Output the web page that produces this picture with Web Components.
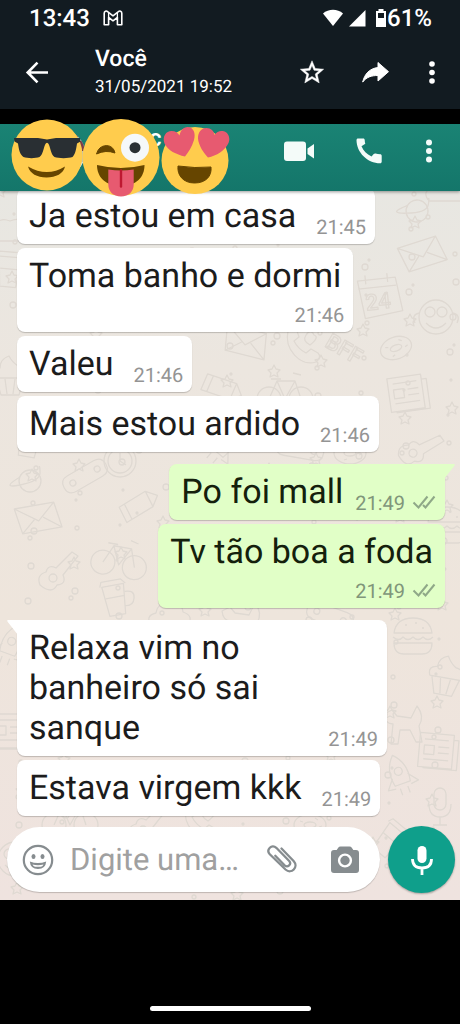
<!DOCTYPE html>
<html lang="pt-BR">
<head>
<meta charset="utf-8">
<meta name="viewport" content="width=device-width, initial-scale=1">
<title>Você</title>
<style>
    body {
        margin: 0;
        background: #000;
        font-family: Roboto, "Liberation Sans", sans-serif;
        text-rendering: geometricPrecision;
    }
</style>
</head>
<body>
<phone-screen>
    <status-bar slot="top" time="13:43" battery="61%"></status-bar>
    <viewer-bar slot="top" name="Você" date="31/05/2021 19:52"></viewer-bar>
    <chat-header></chat-header>
    <chat-thread>
        <chat-message time="21:45">Ja estou em casa</chat-message>
        <chat-message time="21:46" stacked>Toma banho e dormi</chat-message>
        <chat-message time="21:46">Valeu</chat-message>
        <chat-message time="21:46">Mais estou ardido</chat-message>
        <chat-message time="21:49" sent first>Po foi mall</chat-message>
        <chat-message time="21:49" sent stacked>Tv tão boa a foda</chat-message>
        <chat-message time="21:49" first>Relaxa vim no banheiro só sai sanque</chat-message>
        <chat-message time="21:49">Estava virgem kkk</chat-message>
        <chat-composer slot="composer"></chat-composer>
    </chat-thread>
</phone-screen>

<script>
class PhoneScreen extends HTMLElement {
    constructor() {
        super();
        this.attachShadow({ mode: 'open' });
        this.shadowRoot.innerHTML = `
            <style>
                :host {
                    display: flex;
                    flex-direction: column;
                    min-height: 100vh;
                    background: #000;
                }
                .top {
                    background: #121b21;
                }
                main {
                    margin-top: 15px;
                }
                footer {
                    flex: 1;
                    display: flex;
                    justify-content: center;
                    align-items: flex-end;
                    padding-bottom: 13px;
                }
                .home {
                    width: 35%;
                    height: 5px;
                    border-radius: 3px;
                    background: #fff;
                }
            </style>
            <div class="top"><slot name="top"></slot></div>
            <main><slot></slot></main>
            <footer><div class="home"></div></footer>
        `;
    }
}

class StatusBar extends HTMLElement {
    constructor() {
        super();
        this.attachShadow({ mode: 'open' });
    }

    connectedCallback() {
        this.shadowRoot.innerHTML = `
            <style>
                :host {
                    display: flex;
                    align-items: center;
                    height: 36px;
                    padding: 0 28px 0 29px;
                    color: #fff;
                    font-size: 24px;
                    font-weight: 500;
                }
                svg {
                    display: block;
                    fill: #fff;
                }
                .mail {
                    margin-left: 13px;
                }
                .right {
                    display: flex;
                    align-items: center;
                    margin-left: auto;
                }
                .signal {
                    margin: 0 9px 0 5px;
                }
            </style>
            <span>${this.getAttribute('time')}</span>
            <svg class="mail" width="20" height="16" viewBox="0 0 20 16">
                <path d="M1.200 14.800V3.200C1.200 1 3.400.6 4.600 1.600L10 5.800l5.400-4.200c1.200-1 3.400-.6 3.400 1.600v11.600h-4.400V7.400L10 10.800 5.600 7.400v7.400z" fill="none" stroke="#fff" stroke-width="1.600" stroke-linejoin="round"/>
                <path d="M5.600 7.400V2.800M14.400 7.400V2.800" stroke="#fff" stroke-width="1.300"/>
            </svg>
            <div class="right">
                <svg width="20" height="18" viewBox="0 0 20 18"><path d="M0 4.500C5.500-.4 14.500-.4 20 4.500L10 17z"/></svg>
                <svg class="signal" width="18" height="18" viewBox="0 0 18 18"><path d="M17.500 1v16.500H1z"/></svg>
                <svg width="12" height="18" viewBox="0 0 12 18"><path d="M3.500 0h5v2h2.500v16H1V2h2.500zM3 4v5h6V4z" fill-rule="evenodd"/></svg>
                <span>${this.getAttribute('battery')}</span>
            </div>
        `;
    }
}

class ViewerBar extends HTMLElement {
    constructor() {
        super();
        this.attachShadow({ mode: 'open' });
    }

    connectedCallback() {
        this.shadowRoot.innerHTML = `
            <style>
                :host {
                    display: flex;
                    align-items: center;
                    height: 73px;
                    padding: 0 22px 0 25px;
                    color: #fff;
                }
                button {
                    padding: 0;
                    border: 0;
                    background: none;
                    cursor: pointer;
                }
                svg {
                    display: block;
                }
                .titles {
                    flex: 1;
                    margin-left: 46px;
                }
                h1 {
                    margin: 0;
                    font-size: 23px;
                    font-weight: 500;
                    line-height: 28px;
                }
                time {
                    display: block;
                    font-size: 17px;
                    line-height: 28px;
                }
                .actions {
                    display: flex;
                    align-items: center;
                    gap: 36px;
                }
            </style>
            <button aria-label="Voltar">
                <svg width="24" height="24" viewBox="0 0 24 24"><path d="M23 11.500H3M12.500 1.700L2.700 11.500l9.800 9.800" fill="none" stroke="#fff" stroke-width="2.600"/></svg>
            </button>
            <div class="titles">
                <h1>${this.getAttribute('name')}</h1>
                <time>${this.getAttribute('date')}</time>
            </div>
            <div class="actions">
                <button aria-label="Favoritar">
                    <svg width="28" height="28" viewBox="0 0 24 24"><path fill="#fff" stroke="#fff" stroke-width=".4" d="M22 8.740l-7.190-.62L12 1.500 9.190 8.130 2 8.740l5.460 4.730L5.820 20.500 12 16.770 18.180 20.500l-1.630-7.030zM12 14.900l-3.760 2.270 1-4.280-3.320-2.880 4.380-.38L12 5.600l1.710 4.040 4.380.38-3.320 2.880 1 4.280z"/></svg>
                </button>
                <button aria-label="Encaminhar">
                    <svg width="28" height="28" viewBox="0 0 28 28"><path fill="#fff" d="M16 3.500v5C7.500 9.500 2.500 15 .7 23.100 4.500 18 9.500 16.500 16 16.500V22l10.500-9.300z" stroke="#fff" stroke-width="1" stroke-linejoin="round"/></svg>
                </button>
                <button aria-label="Mais opções">
                    <svg width="12" height="24" viewBox="0 0 12 24" fill="#fff"><circle cx="6" cy="3" r="2.800"/><circle cx="6" cy="11.500" r="2.800"/><circle cx="6" cy="20" r="2.800"/></svg>
                </button>
            </div>
        `;
    }
}

class ChatHeader extends HTMLElement {
    constructor() {
        super();
        this.attachShadow({ mode: 'open' });
        this.shadowRoot.innerHTML = `
            <style>
                :host {
                    position: relative;
                    z-index: 2;
                    display: flex;
                    align-items: center;
                    box-sizing: border-box;
                    height: 67px;
                    padding: 0 25px 13px 36px;
                    background: linear-gradient(#1a8374, #14766a);
                    box-shadow: 0 1px 3px rgba(0, 0, 0, 0.4);
                    color: #fff;
                }
                button {
                    padding: 0;
                    border: 0;
                    background: none;
                    cursor: pointer;
                }
                svg {
                    display: block;
                }
                .name {
                    flex: 1;
                    margin-left: 63px;
                    padding-bottom: 27px;
                    font-size: 24px;
                    font-weight: 500;
                    line-height: 26px;
                }
                .actions {
                    display: flex;
                    align-items: center;
                    gap: 40px;
                }
                .stickers {
                    position: absolute;
                    left: 10px;
                    top: -6px;
                }
            </style>
            <svg width="50" height="50" viewBox="0 0 50 50">
                <clipPath id="round"><circle cx="26" cy="27" r="23"/></clipPath>
                <g clip-path="url(#round)">
                    <path fill="#b9c4bd" d="M0 0h50v50H0z"/>
                    <path fill="#8c6a58" d="M0 6h50v5H0z"/>
                    <path fill="#7b3e48" d="M0 15h50v10H0z"/>
                    <path fill="#dfe6e1" d="M0 36h50v14H0z"/>
                </g>
            </svg>
            <span class="name">c</span>
            <div class="actions">
                <button aria-label="Chamada de vídeo">
                    <svg width="32" height="28" viewBox="0 0 32 28" fill="#f4fbf9"><rect x="1" y="4.500" width="22" height="19.500" rx="3"/><path d="M31 7v14.500l-6.500-4.500v-5.500z"/></svg>
                </button>
                <button aria-label="Ligar">
                    <svg width="28" height="28" viewBox="0 0 28 28"><path fill="#f4fbf9" d="M6.500 9.200c1.900 4.500 5.200 8.100 10 10.200l2.200-2.400c.5-.5 1.200-.7 1.800-.5 1.500.5 3.100.7 4.700.8.900 0 1.500.7 1.500 1.500v6c0 .9-.7 1.500-1.500 1.500C12.500 26.300 1.500 15.500 1.500 3c0-.9.7-1.500 1.500-1.500h5.200c.9 0 1.500.7 1.500 1.500.1 1.300.2 2.600.6 3.700z"/></svg>
                </button>
                <button aria-label="Mais opções">
                    <svg width="12" height="24" viewBox="0 0 12 24" fill="#f4fbf9"><circle cx="6" cy="3.500" r="3"/><circle cx="6" cy="12" r="3"/><circle cx="6" cy="20.500" r="3"/></svg>
                </button>
            </div>
            <svg class="stickers" width="220" height="80" viewBox="10 118 220 80">
                <circle cx="47" cy="155" r="35.500" fill="#ffcc4d"/>
                <path fill="#292f33" d="M14 138h24l9 1.500 9-1.500h24l.5 3.500-3.500 2c-1 7-2 11-4.500 13.500-4 1.500-14 1.500-18 0-4-2.500-4-11-6.500-13.800q-1-.7-2 0c-2.500 2.800-2.500 11.300-6.500 13.800-4 1.500-12 1.500-16 0-3.500-2.500-4.500-6.500-5.500-13.500l-3.500-2z"/>
                <path fill="#664500" d="M28 166.500q19 11 37 0c-1.500 7-9 11-18.500 11s-16.500-4-18.500-11z"/>

                <circle cx="121" cy="157.500" r="38.500" fill="#ffcc4d"/>
                <circle cx="135" cy="147.700" r="14" fill="#f5f8fa"/>
                <circle cx="135" cy="147.700" r="5.500" fill="#292f33"/>
                <path fill="#664500" d="M96.500 154q2-8 10-8.500 7 .5 8.500 7.500-9-3.500-18.500 1z" stroke="#664500" stroke-linejoin="round"/>
                <path fill="#664500" d="M97 165q24 6 47.500 0c0 12-8 21-23.500 21s-24-9-24-21z"/>
                <path fill="#e75a70" d="M108.300 169.500q12.700 2 25.400 0v15c0 7-5 12-12.700 12s-12.700-5-12.700-12z"/>
                <path d="M121 170.500v16" stroke="#be1931" stroke-width="2.400" stroke-linecap="round"/>

                <circle cx="195" cy="160.500" r="33.500" fill="#ffcc4d"/>
                <path fill="#e75a70" d="M185 156.500c-9-2-17-6-20.500-13-2.500-7 1.500-12.500 7-12.500 4 0 6.500 2 8 4.500 1-5 4-8.500 8-8.500 6 0 8.500 6.500 6.500 13-2 7-6 12.500-9 16.500z"/>
                <path fill="#e75a70" d="M208 157.500c-4-4-9.500-12-10-19 0-6 3-10.500 8.500-10.500 4.500 0 7.500 3 8 7 2-3 5-4.500 8-4 5 .5 8.500 6 6 12-3.500 8-12 12.500-20.500 14.500z"/>
                <path fill="#664500" d="M178 166q17 2.500 33 1c1 9-5 16-16.500 16s-17.500-8-16.500-17z" stroke="#664500" stroke-linejoin="round"/>
            </svg>
        `;
    }
}

// line drawings of the wallpaper, each about 40px wide and centred on 0,0
const DOODLES = {
    calendar: '<path d="M-20-16h38l4 34-38 4zM-20-8h38M-12-21v9M10-21v9"/><text x="-14" y="14">24</text>',
    monkey: '<circle r="17"/><circle cx="-6" cy="-5" r="5"/><circle cx="6" cy="-5" r="5"/><path d="M-10 6q10 10 20 0M-17-4q-8 2-4 10M17-4q8 2 4 10"/>',
    letter: '<path d="M-22-12h40l4 26h-40zM-22-12l22 16 18-16M-18 14L-4 2M22 14L5 1"/>',
    bff: '<text x="-20" y="8" transform="rotate(30)">BFF</text>',
    phone: '<path d="M-14-14q6-6 9 0l2 6-5 4q4 8 12 12l5-4 7 4q4 4-2 9C-2 22-18 4-14-14zM4-10q5-7 8 0 6 2-4 10-8-4-4-10"/>',
    planet: '<circle r="11"/><path d="M-10-4q-20 12 0 8t20-12-1-6"/>',
    cloud: '<path d="M-18 10q-8-10 4-13 2-12 14-7 12-5 13 6 12 4 4 14z"/>',
    paper: '<path d="M-19-17h34v34h-34zM15-12h5v30h-34M-14-11h24M-14-5h10v9h-10zM0-4h11M0 2h11M-14 9h25"/>',
    bike: '<circle cx="-16" cy="8" r="12"/><circle cx="16" cy="8" r="12"/><path d="M-16 8l8-18h18l6 18M-8-10L0 8l10-18M-14-12h10M8-18l8 2"/>',
    burger: '<path d="M-19-4q2-15 19-15T19-4zM-20 0q6 5 10 0 5 5 10 0 5 5 10 0 5 5 10 0M-19 6h38q0 11-10 11H-9q-10 0-10-11M-8-12h2M2-14h2M9-9h2"/>',
    cupcake: '<path d="M-14 2l5 17H9l5-17zM-16 2q-4-9 6-10 0-9 9-12 3 6 9 10 10 1 8 12zM-5 3l2 15M5 3L3 18"/>',
    dog: '<path d="M-18-12l8-4 5 6 14 2 6-12q8 10 2 20l3 16h-6l-6-12h-10l-2 14h-7l2-20q-8 0-9-10z"/>',
    mic: '<rect x="-6" y="-18" width="12" height="22" rx="6"/><path d="M-11-2q0 13 11 13T11-2M0 11v8M-7 19H7"/>',
    donut: '<ellipse rx="16" ry="11"/><ellipse rx="6" ry="3"/><path d="M-10-4l3 1M5-7l3 2M9 2l3-1M-6 7l3-1"/>',
    guitar: '<path d="M-20 14q-4-10 6-13 2-8 10-4L12-19l6 4L3 4q4 9-6 10-5 10-17 0z"/><circle cx="-7" cy="7" r="4"/>',
    cup: '<path d="M-12-14h22l-3 30H-9zM-14-14l2-5h20l4 5M10-6q10 0 8 8T8 8M-10-2H9"/>',
    board: '<path d="M-24 0q0-9 9-9h30q9 0 9 9t-9 9h-30q-9 0-9-9z"/><circle cx="-14" r="3"/><circle cx="14" r="3"/>',
    rocket: '<path d="M0-22q12 12 8 30H-8q-4-18 8-30zM-8 0l-8 10 8 1M8 0l8 10-8 1M-4 12v7M4 12v7"/><circle cy="-5" r="4"/>',
    pencil: '<path d="M-20-6L10-12l10 8-8 9-30 6zM10-12l2 17M-14-7l2 17"/>',
    clock: '<circle r="16"/><circle r="12"/><path d="M0-8v8l6 4"/>'
};

class ChatWallpaper extends HTMLElement {
    constructor() {
        super();
        this.attachShadow({ mode: 'open' });
        this.shadowRoot.innerHTML = `
            <style>
                :host {
                    display: block;
                    background: linear-gradient(#e8e7e2, #ece6df 25%, #eee5dc 60%, #efe3df);
                }
                svg {
                    display: block;
                    width: 100%;
                    height: 100%;
                }
                .lines {
                    fill: none;
                    stroke: #dfd9d2;
                    stroke-width: 1.3;
                    stroke-linejoin: round;
                    font: 500 22px Roboto, sans-serif;
                }
            </style>
            <svg aria-hidden="true">
                <defs>
                    <pattern id="doodles" width="460" height="712" patternUnits="userSpaceOnUse">
                        <g class="lines">${this.drawDoodles()}</g>
                    </pattern>
                </defs>
                <rect width="100%" height="100%" fill="url(#doodles)"/>
            </svg>
        `;
    }

    drawDoodles() {
        // name, x, y, rotation
        const placed = [
            ['planet', 417, 20, 10], ['cloud', 447, 0, 0], ['calendar', 379, 104, -6], ['monkey', 436, 126, 0],
            ['letter', 246, 150, 14], ['phone', 302, 154, 0], ['bff', 345, 158, 0], ['donut', 396, 157, -20],
            ['pencil', 222, 198, 30], ['bike', 285, 200, 0], ['paper', 408, 202, -8], ['clock', 120, 270, 0],
            ['burger', 413, 446, 0], ['cupcake', 446, 485, 10], ['dog', 402, 535, 0], ['paper', 438, 560, 5],
            ['mic', 440, 615, 0], ['guitar', 422, 258, 20], ['rocket', 222, 255, 40],
            ['cup', 30, 250, 10], ['board', 85, 285, -30], ['letter', 38, 326, -10], ['pencil', 140, 315, -20],
            ['guitar', 60, 380, 0], ['bike', 120, 366, 10], ['cup', 116, 408, -10], ['planet', 30, 290, 0],
            ['dog', 240, 432, 0], ['board', 330, 425, 20], ['cloud', 170, 425, 0], ['rocket', 10, 455, 20],
            ['cupcake', 10, 185, 0], ['cup', 10, 80, 5], ['cloud', 10, 40, 0], ['letter', 422, 62, -18],
            ['monkey', 15, 668, 0], ['bike', 70, 626, 0], ['phone', 200, 630, 0],
            ['guitar', 150, 632, 0], ['donut', 310, 634, 0], ['cup', 390, 650, 40], ['burger', 447, 335, 0],
            ['rocket', 400, 585, -20], ['board', 300, 258, 10], ['donut', 350, 262, 0], ['paper', 10, 540, 0]
        ];
        const shapes = placed.map(([name, x, y, angle]) =>
            `<g transform="translate(${x} ${y}) rotate(${angle})">${DOODLES[name]}</g>`
        );

        // small rings and stars scattered between the drawings
        for (let i = 0; i < 330; i++) {
            const x = (i * 83) % 457;
            const y = (i * 131 + (i % 7) * 17) % 709;
            if (i % 5 === 0) {
                shapes.push(`<path d="M${x} ${y - 6}l2 4 4 1-3 3 1 4-4-2-4 2 1-4-3-3 4-1z"/>`);
            } else {
                shapes.push(`<circle cx="${x}" cy="${y}" r="${1 + i % 3}"/>`);
            }
        }
        return shapes.join('');
    }
}

class ChatThread extends HTMLElement {
    constructor() {
        super();
        this.attachShadow({ mode: 'open' });
        this.shadowRoot.innerHTML = `
            <style>
                :host {
                    position: relative;
                    display: block;
                    overflow: hidden;
                }
                chat-wallpaper {
                    position: absolute;
                    inset: 0;
                }
                .messages {
                    position: relative;
                    display: flex;
                    flex-direction: column;
                    gap: 4px;
                    margin-top: -3px;
                    padding: 0 15px 0 17px;
                }
                .composer {
                    position: relative;
                    padding: 10px 5px 7px 7px;
                }
            </style>
            <chat-wallpaper></chat-wallpaper>
            <div class="messages"><slot></slot></div>
            <div class="composer"><slot name="composer"></slot></div>
        `;
    }
}

class ChatMessage extends HTMLElement {
    constructor() {
        super();
        this.attachShadow({ mode: 'open' });
    }

    connectedCallback() {
        const sent = this.hasAttribute('sent');
        const ticks = sent ? `
            <svg width="24" height="16" viewBox="0 0 24 16" fill="none" stroke="#8fa888" stroke-width="2">
                <path d="M1.500 7.500l5 5L15.500 1.500M11 10l2.500 2.500L22.500 1.500"/>
            </svg>` : '';
        const tail = this.hasAttribute('first') ? '<svg class="tail" width="11" height="16" viewBox="0 0 11 16"><path d="M11 0H1Q-.5.500.8 2L11 15z"/></svg>' : '';

        this.shadowRoot.innerHTML = `
            <style>
                :host {
                    position: relative;
                    display: flex;
                    align-items: flex-end;
                    gap: 20px;
                    align-self: flex-start;
                    box-sizing: border-box;
                    max-width: calc(100% - 58px);
                    padding: 8px 9px 3px 12px;
                    border-radius: 8px;
                    background: #fff;
                    box-shadow: 0 1px 1px rgba(0, 0, 0, 0.2);
                    color: #1c1c1c;
                }
                :host([sent]) {
                    align-self: flex-end;
                    gap: 12px;
                    background: #e1ffc7;
                    color: #14200c;
                }
                :host([first]) {
                    margin-top: 8px;
                    border-top-left-radius: 0;
                }
                :host([sent][first]) {
                    border-top-left-radius: 8px;
                    border-top-right-radius: 0;
                }
                :host([stacked]) {
                    flex-direction: column;
                    gap: 0;
                }
                .text {
                    margin-bottom: 5px;
                    font-size: 34px;
                    line-height: 40px;
                }
                :host([stacked]) .text {
                    padding-right: 3px;
                }
                .meta {
                    display: flex;
                    align-items: center;
                    gap: 7px;
                    color: #949494;
                    font-size: 20px;
                    line-height: 28px;
                }
                :host([sent]) .meta {
                    color: #80967a;
                }
                .tail {
                    position: absolute;
                    top: 0;
                    left: -10px;
                    fill: #fff;
                }
                :host([sent]) .tail {
                    left: auto;
                    right: -10px;
                    fill: #e1ffc7;
                    transform: scaleX(-1);
                }
            </style>
            ${tail}
            <span class="text"><slot></slot></span>
            <span class="meta"><time>${this.getAttribute('time')}</time>${ticks}</span>
        `;
    }
}

class ChatComposer extends HTMLElement {
    constructor() {
        super();
        this.attachShadow({ mode: 'open' });
        this.shadowRoot.innerHTML = `
            <style>
                :host {
                    display: flex;
                    align-items: center;
                    gap: 8px;
                }
                .field {
                    flex: 1;
                    display: flex;
                    align-items: center;
                    min-width: 0;
                    height: 65px;
                    box-sizing: border-box;
                    padding: 0 20px 0 15px;
                    border-radius: 33px;
                    background: #fff;
                    box-shadow: 0 1px 1px rgba(0, 0, 0, 0.2);
                }
                input {
                    flex: 1;
                    min-width: 0;
                    margin: 0 14px 0 16px;
                    padding: 0;
                    border: 0;
                    outline: 0;
                    background: none;
                    color: #1c1c1c;
                    font: 31px Roboto, "Liberation Sans", sans-serif;
                    line-height: 40px;
                    text-rendering: inherit;
                }
                input::placeholder {
                    color: #a0a0a0;
                    opacity: 1;
                }
                button {
                    flex: none;
                    padding: 0;
                    border: 0;
                    background: none;
                    cursor: pointer;
                }
                svg {
                    display: block;
                }
                .camera {
                    margin-left: 32px;
                }
                .mic {
                    display: flex;
                    align-items: center;
                    justify-content: center;
                    width: 67px;
                    height: 67px;
                    border-radius: 50%;
                    background: #0f9f8b;
                    box-shadow: 0 1px 2px rgba(0, 0, 0, 0.3);
                }
            </style>
            <div class="field">
                <button aria-label="Emojis">
                    <svg width="32" height="32" viewBox="0 0 32 32" fill="#868c8f">
                        <circle cx="16" cy="16" r="14.200" fill="none" stroke="#868c8f" stroke-width="2.200"/>
                        <ellipse cx="11.500" cy="12.500" rx="2" ry="2.600"/>
                        <ellipse cx="20.500" cy="12.500" rx="2" ry="2.600"/>
                        <path d="M7.800 17.500q8.200 3 16.400 0-.6 7.500-8.200 7.500t-8.200-7.500zM10.500 20.500q.8 2 2.500 2.200h6q1.800-.4 2.500-2.200-5.500 1.300-11 0z" fill-rule="evenodd"/>
                    </svg>
                </button>
                <input type="text" placeholder="Digite uma…" aria-label="Digite uma mensagem">
                <button aria-label="Anexar">
                    <svg width="32" height="32" viewBox="0 0 32 32">
                        <path d="M15.500 4.500L27.800 17.200c5 5.600-2.300 13.600-8.300 8.300L3.800 10.300C-.3 5.600 5.800-.3 10.300 3.800L23.200 17c2.700 3.300-1.400 7-4.600 4.300L9.300 11.800" fill="none" stroke="#868c8f" stroke-width="2.300" stroke-linecap="round"/>
                    </svg>
                </button>
                <button class="camera" aria-label="Câmera">
                    <svg width="30" height="28" viewBox="0 0 30 28">
                        <path d="M10.500.5h9q1.500 0 2.300 1.300L23.300 4H26q3 0 3 3v17q0 3-3 3H4q-3 0-3-3V7q0-3 3-3h2.700l1.500-2.200Q9 .5 10.500.5z" fill="#868c8f"/>
                        <circle cx="15" cy="14.500" r="5.900" fill="#868c8f" stroke="#fff" stroke-width="2.400"/>
                    </svg>
                </button>
            </div>
            <button class="mic" aria-label="Gravar áudio">
                <svg width="24" height="32" viewBox="0 0 24 32">
                    <rect x="7.500" y="2" width="9" height="17" rx="4.500" fill="#fff"/>
                    <path d="M2.500 15q0 9 9.500 9t9.500-9M12 24v7" fill="none" stroke="#fff" stroke-width="2.800"/>
                </svg>
            </button>
        `;
    }
}

customElements.define('phone-screen', PhoneScreen);
customElements.define('status-bar', StatusBar);
customElements.define('viewer-bar', ViewerBar);
customElements.define('chat-header', ChatHeader);
customElements.define('chat-wallpaper', ChatWallpaper);
customElements.define('chat-thread', ChatThread);
customElements.define('chat-message', ChatMessage);
customElements.define('chat-composer', ChatComposer);
</script>
</body>
</html>
